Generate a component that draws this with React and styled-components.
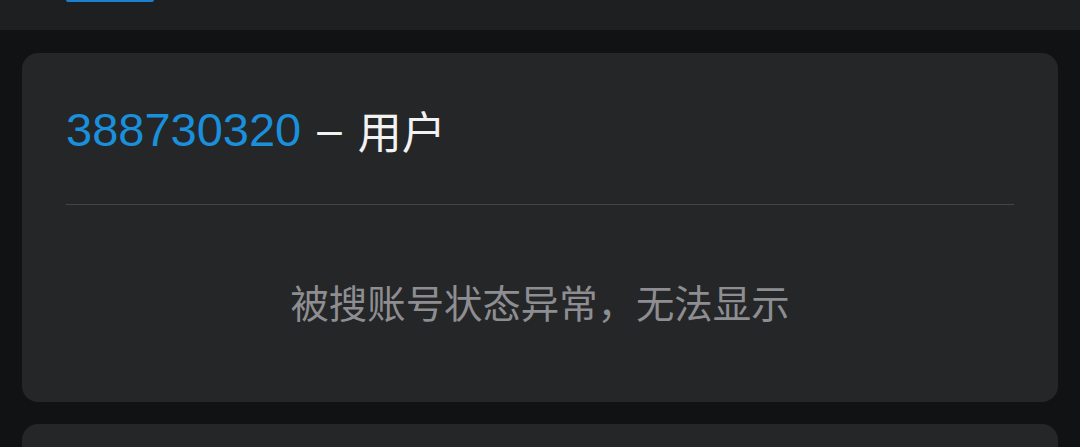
import styled, { createGlobalStyle } from 'styled-components';

// ------------------------------
// Global styles
// ------------------------------
const GlobalStyle = createGlobalStyle`
  html, body {
    margin: 0;
    padding: 0;
    background: #111214;
    font-family: "Liberation Sans", "Noto Sans CJK SC", sans-serif;
  }
`;

// ------------------------------
// Styled Components
// ------------------------------
const Page = styled.div`
  width: 1080px;
  height: 447px;
  overflow: hidden;
  background: #111214;
`;

const Header = styled.div`
  height: 30px;
  background: #1e1f21;
  padding-left: 66px;
`;

const TabIndicator = styled.div`
  width: 88px;
  height: 2px;
  background: #1b7fd0;
  border-radius: 0 0 2px 2px;
`;

const List = styled.div`
  display: flex;
  flex-direction: column;
  gap: 22px;
  padding: 23px 22px 0;
`;

const Card = styled.div`
  background: #252628;
  border-radius: 16px;
  height: ${(p) => p.$height}px;
  padding: 0 44px;
  display: flex;
  flex-direction: column;
`;

const TitleRow = styled.div`
  height: 152px;
  display: flex;
  align-items: center;
  font-size: 44px;
  color: #f2f2f2;
  border-bottom: 1px solid #444548;
  box-sizing: border-box;
  padding-top: 2px;
`;

const Uid = styled.span`
  color: #1a8fdc;
  font-size: 47px;
`;

const Dash = styled.span`
  margin: 0 16px 0 16px;
`;

const Message = styled.div`
  flex: 1;
  display: flex;
  align-items: center;
  justify-content: center;
  font-size: 38.4px;
  color: #8e8e92;
  padding-bottom: 6px;
`;

// ------------------------------
// Component
// ------------------------------
export default function App() {
  return (
    <Page>
      <GlobalStyle />
      <Header>
        <TabIndicator />
      </Header>
      <List>
        <Card $height={349}>
          <TitleRow>
            <Uid>388730320</Uid>
            <Dash>–</Dash>
            <span>用户</span>
          </TitleRow>
          <Message>被搜账号状态异常，无法显示</Message>
        </Card>
        <Card $height={200} />
      </List>
    </Page>
  );
}
